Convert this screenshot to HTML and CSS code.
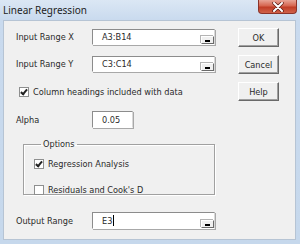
FILE: index.html
```html
<html lang="en">
<head>
    <meta charset="UTF-8">
    <meta name="viewport" content="width=device-width, initial-scale=1.0">
    <title>Linear Regression</title>
    <link rel="stylesheet" href="styles.css">
</head>
<body>
    <div class="window">
        <div class="titlebar">
            <span class="title">Linear Regression</span>
            <span class="closebtn">
                <svg width="14" height="10" viewBox="0 0 14 10">
                    <path d="M3 1 L11 9 M11 1 L3 9" stroke="#5a1a12" stroke-width="3.4" stroke-linecap="round"/>
                    <path d="M3 1 L11 9 M11 1 L3 9" stroke="#ffffff" stroke-width="2" stroke-linecap="round"/>
                </svg>
            </span>
        </div>

        <div class="client">
            <div class="fields">
                <div class="row row-x">
                    <span class="label">Input Range X</span>
                    <div class="refedit"><span class="value">A3:B14</span><span class="pick"></span></div>
                </div>
                <div class="row row-y">
                    <span class="label">Input Range Y</span>
                    <div class="refedit"><span class="value">C3:C14</span><span class="pick"></span></div>
                </div>
                <div class="check check-head">
                    <span class="box checked"></span>
                    <span>Column headings included with data</span>
                </div>
                <div class="row row-alpha">
                    <span class="label">Alpha</span>
                    <div class="textbox"><span class="value">0.05</span></div>
                </div>

                <fieldset class="group">
                    <legend>Options</legend>
                    <div class="check">
                        <span class="box checked"></span>
                        <span>Regression Analysis</span>
                    </div>
                    <div class="check check-res">
                        <span class="box"></span>
                        <span>Residuals and Cook's D</span>
                    </div>
                </fieldset>

                <div class="row row-out">
                    <span class="label">Output Range</span>
                    <div class="refedit"><span class="value">E3<span class="caret"></span></span><span class="pick"></span></div>
                </div>
            </div>

            <div class="buttons">
                <span class="btn btn-ok">OK</span>
                <span class="btn">Cancel</span>
                <span class="btn">Help</span>
            </div>
        </div>
    </div>
</body>
</html>
```

FILE: styles.css
```css
body {
  margin: 0;
  background: #ffffff;
}

.window {
  width: 300px;
  height: 244px;
  display: flex;
  flex-direction: column;
  background: linear-gradient(#dbe7f4, #c9daee 20px, #c6d8ec);
  box-sizing: border-box;
}

.titlebar {
  height: 20px;
  display: flex;
  align-items: flex-start;
  justify-content: space-between;
  flex-shrink: 0;
}

.title {
  font-family: "Noto Sans", sans-serif;
  font-size: 10px;
  color: #1e1e1e;
  padding: 4px 0 0 3px;
  line-height: 12px;
}

.closebtn {
  width: 39px;
  height: 14px;
  margin-right: 3px;
  box-sizing: border-box;
  border: 1px solid #8b3329;
  border-top: none;
  border-radius: 0 0 4px 4px;
  background: linear-gradient(#e8a496, #d6654f 45%, #c13d26 55%, #d0624a);
  display: flex;
  align-items: center;
  justify-content: center;
}

.client {
  flex: 1;
  margin: 0 4px 4px 3px;
  background: #f0f0f0;
  border: 1px solid #b6c4d4;
  box-sizing: border-box;
  display: flex;
  font-family: "DejaVu Sans", sans-serif;
  font-stretch: condensed;
  font-size: 9.1px;
  color: #2a2a2a;
}

.fields {
  width: 211px;
  padding: 8px 0 0 12px;
  display: flex;
  flex-direction: column;
}

.row {
  display: flex;
  align-items: center;
  height: 16px;
}

.label {
  width: 76px;
}

.row-y { margin-top: 11px; }
.row-alpha { margin-top: 13px; height: 17px; }
.row-out { margin-top: 17px; height: 17px; }

.refedit, .textbox {
  position: relative;
  height: 100%;
  box-sizing: border-box;
  background: #ffffff;
  border-top: 1px solid #8c8c8c;
  border-left: 1px solid #8c8c8c;
  border-right: 1px solid #d8d8d8;
  border-bottom: 1px solid #ffffff;
  box-shadow: 1px 1px 0 #a8a8a8;
  display: flex;
  align-items: center;
}

.refedit { width: 123px; }
.textbox { width: 41px; }

.value {
  padding-left: 9px;
  display: flex;
  align-items: center;
}

.caret {
  width: 1px;
  height: 11px;
  background: #000;
  margin-left: 1px;
}

.pick {
  position: absolute;
  right: 0;
  bottom: 0;
  width: 13px;
  height: 8px;
  box-sizing: border-box;
  background: #f0f0f0;
  border-top: 1px solid #ffffff;
  border-left: 1px solid #ffffff;
  border-right: 1px solid #6a6a6a;
  border-bottom: 1px solid #6a6a6a;
  box-shadow: -1px -1px 0 #b4b4b4;
}

.pick::after {
  content: "";
  position: absolute;
  left: 3px;
  bottom: 1px;
  width: 5px;
  height: 2px;
  background: #000;
}

.check {
  display: flex;
  align-items: center;
  height: 12px;
}

.check-head {
  margin: 14px 0 0 3px;
}

.box {
  width: 10px;
  height: 10px;
  box-sizing: border-box;
  background: #ffffff;
  border: 1px solid #8e8f8f;
  margin-right: 4px;
  position: relative;
}

.box.checked::after {
  content: "";
  position: absolute;
  left: 2px;
  top: 0;
  width: 2px;
  height: 5px;
  border-right: 2px solid #222;
  border-bottom: 2px solid #222;
  transform: rotate(40deg);
}

.group {
  margin: 11px 0 0 7px;
  width: 192px;
  height: 56px;
  box-sizing: border-box;
  border: 1px solid #a0a0a0;
  box-shadow: 1px 1px 0 #ffffff, inset 1px 1px 0 #ffffff;
  padding: 9px 0 0 10px;
}

.group legend {
  padding: 0 2px;
  margin-left: 7px;
  line-height: 10px;
}

.check-res {
  margin-top: 14px;
}

.buttons {
  display: flex;
  flex-direction: column;
  gap: 8px;
  padding: 7px 0 0 11px;
}

.btn {
  width: 41px;
  height: 19px;
  box-sizing: border-box;
  display: flex;
  align-items: center;
  justify-content: center;
  background: #f0f0f0;
  border-top: 1px solid #ffffff;
  border-left: 1px solid #ffffff;
  border-right: 1px solid #696969;
  border-bottom: 1px solid #696969;
  box-shadow: inset -1px -1px 0 #a0a0a0;
}
```
